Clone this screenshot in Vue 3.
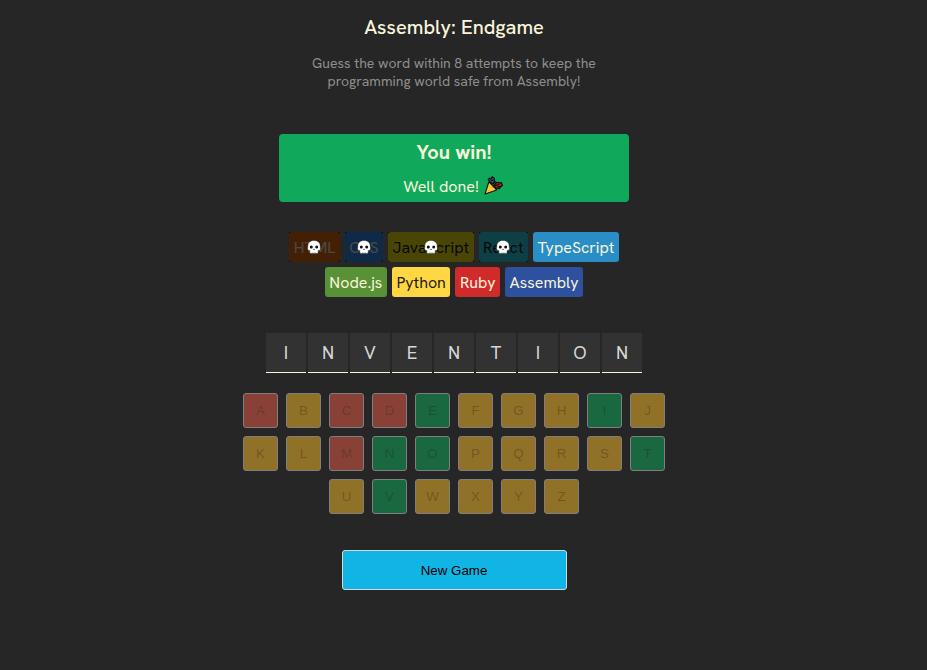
<script setup>
const languages = [
  { name: 'HTML', kind: 'html', lost: true },
  { name: 'CSS', kind: 'css', lost: true },
  { name: 'JavaScript', kind: 'javascript', lost: true },
  { name: 'React', kind: 'react', lost: true },
  { name: 'TypeScript', kind: 'typescript', lost: false },
  { name: 'Node.js', kind: 'node', lost: false },
  { name: 'Python', kind: 'python', lost: false },
  { name: 'Ruby', kind: 'ruby', lost: false },
  { name: 'Assembly', kind: 'assembly', lost: false }
]
const word = [...'INVENTION']
const guessed = [...'ACDEIMNOTV']
const alphabet = [...'ABCDEFGHIJKLMNOPQRSTUVWXYZ']
const keyState = (letter) => {
  if (!guessed.includes(letter)) return ''
  return word.includes(letter) ? 'correct' : 'wrong'
}
</script>

<template>
  <main>
    <header>
      <h1>Assembly: Endgame</h1>
      <p>Guess the word within 8 attempts to keep the<br />programming world safe from Assembly!</p>
    </header>

    <section class="status">
      <h2>You win!</h2>
      <p>
        <span>Well done!</span>
        <svg class="popper" viewBox="0 0 18 18" aria-hidden="true">
          <path d="M4.6 5.6 12 13.200 1 17z" fill="#ffc83d" stroke="#111" stroke-width="1.1" stroke-linejoin="round" />
          <path d="M5.600 5.400 4 3.300l1-1.200 1.600.8L7.800.8l2.100 1.300-.4 1.900 1.100 1.200-2 2.600z" fill="#176c9c" stroke="#111" stroke-width="1.200" stroke-linejoin="round" />
          <path d="m9.300 9.300 2.300-3.200 2.400.4 2.400-.1 1.100 2.600-1.800 1.200-1.200 1.700-3-.3z" fill="#a92a23" stroke="#111" stroke-width="1.200" stroke-linejoin="round" />
          <path d="m6.600 4.800 2.200-1.300m1 5.900 4.600-1.500M8 7l2.100-1.800M12.500 10.500l3-.7" fill="none" stroke="#111" stroke-width="1.200" />
          <path d="m5 10 .7.8m1.800-.4.7.7M4.600 13.600l.6.6" stroke="#d87618" stroke-width=".9" />
        </svg>
      </p>
    </section>

    <section class="languages">
      <span v-for="lang in languages" :key="lang.name" class="chip" :class="[lang.kind, { lost: lang.lost }]">
        <span class="name">{{ lang.name }}</span>
        <span v-if="lang.lost" class="overlay">
          <svg class="skull" viewBox="0 0 14 14" aria-hidden="true">
            <path d="M7 .4C3.300.400.800 2.700.800 5.900c0 1.100-.3 1.800-.3 2.800 0 1.200 1 1.700 2.300 1.900v1.600c0 .8.6 1.300 1.300 1.300h5.800c.7 0 1.300-.5 1.300-1.300v-1.600c1.300-.2 2.300-.7 2.300-1.900 0-1-.3-1.700-.3-2.800C13.200 2.700 10.700.4 7 .4z" fill="#fff" stroke="#111" stroke-width=".4" />
            <ellipse cx="4.300" cy="7" rx="1.500" ry="1.600" fill="#111" />
            <ellipse cx="9.700" cy="7" rx="1.500" ry="1.600" fill="#111" />
            <path d="m7 8.600-.8 1.400h1.600z" fill="#111" />
            <path d="M5.700 12v1M7 12v1M8.300 12v1" stroke="#777" stroke-width=".4" />
          </svg>
        </span>
      </span>
    </section>

    <section class="word">
      <span v-for="(letter, i) in word" :key="i">{{ letter }}</span>
    </section>

    <section class="keyboard">
      <button v-for="letter in alphabet" :key="letter" disabled :class="keyState(letter)">{{ letter }}</button>
    </section>

    <button class="new-game">New Game</button>
  </main>
</template>

<style>
body {
  background: #262626;
}
</style>

<style scoped>
* {
  box-sizing: border-box;
}
main {
  display: flex;
  flex-direction: column;
  align-items: center;
  width: 908px;
  height: 670px;
  padding-top: 14px;
  font-family: "Hanken Grotesk", Roboto, "Liberation Sans", sans-serif;
  color: #f9f4da;
}
h1, h2, p {
  margin: 0;
}
header {
  text-align: center;
}
h1 {
  font-size: 20px;
  font-weight: 500;
  line-height: 26px;
}
header p {
  margin-top: 14px;
  font-size: 14px;
  line-height: 18px;
  color: #8e8e8e;
}
.status {
  display: flex;
  flex-direction: column;
  align-items: center;
  width: 350px;
  height: 68px;
  margin-top: 44px;
  padding-top: 5px;
  border-radius: 4px;
  background: #10a95b;
}
h2 {
  font-size: 20px;
  font-weight: 700;
  line-height: 26px;
}
.status p {
  display: flex;
  gap: 5px;
  margin-top: 11px;
  padding-right: 2px;
  font-size: 16px;
  line-height: 21px;
}
.popper {
  width: 19px;
  height: 19px;
}
.languages {
  display: flex;
  flex-wrap: wrap;
  justify-content: center;
  gap: 5px;
  width: 350px;
  margin-top: 30px;
}
.chip {
  position: relative;
  display: flex;
  align-items: center;
  height: 30px;
  padding: 0 4.5px;
  border-radius: 3px;
  font-size: 16px;
  white-space: nowrap;
}
.overlay {
  position: absolute;
  inset: 0;
  display: flex;
  align-items: center;
  justify-content: center;
  background: rgba(0, 0, 0, 0.7);
}
.skull {
  width: 14px;
  height: 14px;
}
.html { background: #e2680f; }
.css { background: #328af1; }
.javascript { background: #f4eb13; color: #1e1e1e; }
.react { background: #2ed3e9; color: #1e1e1e; }
.typescript { background: #298ec6; }
.node { background: #599137; }
.python { background: #ffd742; color: #1e1e1e; }
.ruby { background: #d02b2b; }
.assembly { background: #2d519f; }
.word {
  display: flex;
  gap: 2px;
  margin-top: 36px;
}
.word span {
  width: 40px;
  height: 40px;
  border-bottom: 1px solid #f9f4da;
  background: #323232;
  color: #d7d7d7;
  font-size: 18px;
  line-height: 40px;
  text-align: center;
}
.keyboard {
  display: flex;
  flex-wrap: wrap;
  justify-content: center;
  gap: 8px;
  width: 450px;
  margin-top: 20px;
}
button {
  padding: 0;
  border: 1px solid #d7d7d7;
  border-radius: 3px;
  font-family: "Liberation Sans", Arial, sans-serif;
  font-size: 13.3333px;
  color: #000;
}
.keyboard button {
  width: 35px;
  height: 35px;
  background: #fcba29;
  color: rgba(16, 16, 16, 0.3);
  opacity: 0.5;
}
.keyboard .correct { background: #10a95b; }
.keyboard .wrong { background: #ec5d49; }
.new-game {
  width: 225px;
  height: 40px;
  margin-top: 36px;
  background: #11b5e5;
}
</style>
